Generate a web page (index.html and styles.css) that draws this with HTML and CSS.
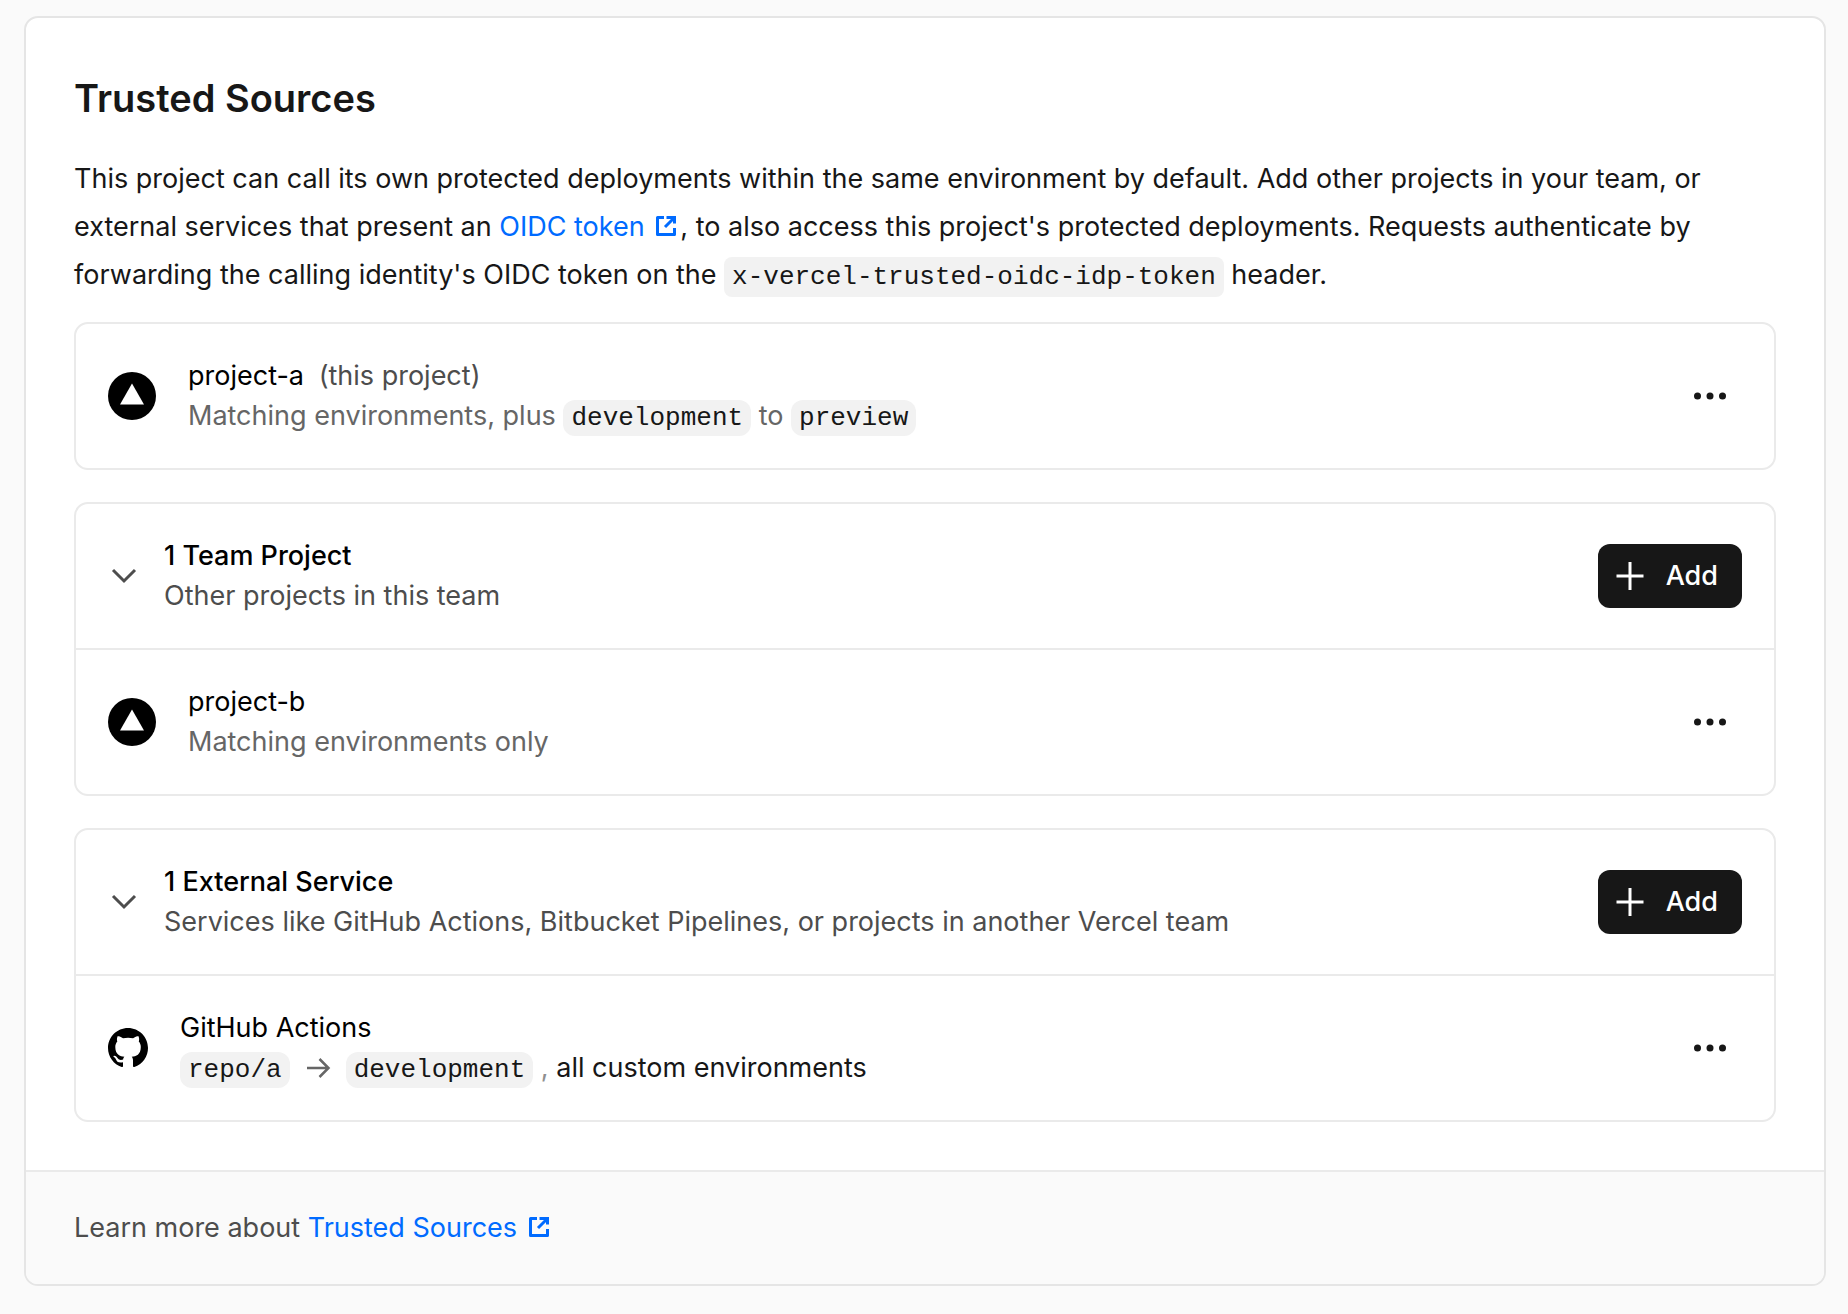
FILE: index.html
```html
<!DOCTYPE html>
<html lang="en">
<head>
  <meta charset="utf-8">
  <meta name="viewport" content="width=device-width, initial-scale=1">
  <title>Trusted Sources</title>
  <link rel="stylesheet" href="styles.css">
</head>
<body>
  <svg class="sprite" aria-hidden="true">
    <symbol id="icon-external" viewBox="0 0 28 28">
      <path fill="none" stroke="currentColor" stroke-width="3" stroke-linejoin="round" d="M12 5.500H5.500V22.500H22.500V16"/>
      <path fill="none" stroke="currentColor" stroke-width="3" d="M14.500 5.500H22.500V11.500M22 6L13 15"/>
    </symbol>
    <symbol id="icon-project" viewBox="0 0 48 48">
      <circle cx="24" cy="24" r="24"/>
      <path fill="#fff" d="M24 11.500L36 32.500H12Z"/>
    </symbol>
    <symbol id="icon-dots" viewBox="0 0 32 32">
      <circle cx="3.500" cy="16" r="3.500"/><circle cx="16" cy="16" r="3.500"/><circle cx="28.500" cy="16" r="3.500"/>
    </symbol>
    <symbol id="icon-chevron" viewBox="0 0 32 32">
      <path fill="none" stroke="currentColor" stroke-width="3" d="M5 10L16 21L27 10"/>
    </symbol>
    <symbol id="icon-plus" viewBox="0 0 32 32">
      <path fill="none" stroke="currentColor" stroke-width="3" d="M16 2V30M2.500 16H29.500"/>
    </symbol>
    <symbol id="icon-arrow" viewBox="0 0 32 32">
      <path fill="none" stroke="currentColor" stroke-width="2.500" d="M5 16H26M17.500 7L26.500 16L17.500 25"/>
    </symbol>
    <symbol id="icon-github" viewBox="0 0 16 16">
      <path d="M8 0C3.580 0 0 3.580 0 8c0 3.540 2.290 6.530 5.470 7.590.4.070.55-.17.55-.38 0-.19-.01-.82-.01-1.490-2.010.37-2.530-.49-2.690-.94-.09-.23-.48-.94-.82-1.130-.28-.15-.68-.52-.01-.53.63-.01 1.080.58 1.230.82.72 1.210 1.870.87 2.330.66.070-.52.28-.87.51-1.070-1.780-.2-3.640-.89-3.640-3.950 0-.87.31-1.590.82-2.150-.08-.2-.36-1.020.08-2.120 0 0 .67-.21 2.200.82.640-.18 1.320-.27 2-.27s1.360.09 2 .27c1.530-1.040 2.200-.82 2.200-.82.440 1.100.16 1.920.08 2.120.51.560.82 1.270.82 2.150 0 3.070-1.870 3.750-3.650 3.950.29.250.54.730.54 1.480 0 1.070-.01 1.930-.01 2.200 0 .21.15.46.55.38A8.010 8.010 0 0 0 16 8c0-4.420-3.580-8-8-8z"/>
    </symbol>
  </svg>

  <main class="card">
    <div class="card-body">
      <h1 class="title">Trusted Sources</h1>
      <p class="intro">This project can call its own protected deployments within the same environment by default. Add other projects in your team, or external services that present an <a class="link" href="#oidc">OIDC token <svg class="icon-inline"><use href="#icon-external"/></svg></a>, to also access this project's protected deployments. Requests authenticate by forwarding the calling identity's OIDC token on the <code class="code">x-vercel-trusted-oidc-idp-token</code> header.</p>

      <div class="groups">
        <section class="group">
          <div class="row row-project">
            <svg class="avatar"><use href="#icon-project"/></svg>
            <div class="text">
              <div class="name">project-a <span class="note">(this project)</span></div>
              <div class="detail">Matching environments, plus <code class="code chip">development</code> to <code class="code chip">preview</code></div>
            </div>
            <button class="more" type="button" aria-label="Project actions"><svg class="icon"><use href="#icon-dots"/></svg></button>
          </div>
        </section>

        <section class="group">
          <div class="row row-header">
            <button class="toggle" type="button" aria-label="Collapse team projects" aria-expanded="true"><svg class="icon"><use href="#icon-chevron"/></svg></button>
            <div class="text">
              <h2 class="heading">1 Team Project</h2>
              <p class="summary">Other projects in this team</p>
            </div>
            <button class="add" type="button"><svg class="icon"><use href="#icon-plus"/></svg>Add</button>
          </div>
          <div class="row row-project">
            <svg class="avatar"><use href="#icon-project"/></svg>
            <div class="text">
              <div class="name">project-b</div>
              <div class="detail">Matching environments only</div>
            </div>
            <button class="more" type="button" aria-label="Project actions"><svg class="icon"><use href="#icon-dots"/></svg></button>
          </div>
        </section>

        <section class="group">
          <div class="row row-header">
            <button class="toggle" type="button" aria-label="Collapse external services" aria-expanded="true"><svg class="icon"><use href="#icon-chevron"/></svg></button>
            <div class="text">
              <h2 class="heading">1 External Service</h2>
              <p class="summary">Services like GitHub Actions, Bitbucket Pipelines, or projects in another Vercel team</p>
            </div>
            <button class="add" type="button"><svg class="icon"><use href="#icon-plus"/></svg>Add</button>
          </div>
          <div class="row row-service">
            <svg class="logo"><use href="#icon-github"/></svg>
            <div class="text">
              <div class="name">GitHub Actions</div>
              <div class="mapping">
                <span><code class="code chip">repo/a</code></span>
                <svg class="icon"><use href="#icon-arrow"/></svg>
                <span><code class="code chip">development</code> <span class="comma">,</span> all custom environments</span>
              </div>
            </div>
            <button class="more" type="button" aria-label="Service actions"><svg class="icon"><use href="#icon-dots"/></svg></button>
          </div>
        </section>
      </div>
    </div>
    <footer class="card-footer">Learn more about <a class="link" href="#trusted-sources">Trusted Sources <svg class="icon-inline"><use href="#icon-external"/></svg></a></footer>
  </main>
</body>
</html>
```
FILE: styles.css
```css
* {
  box-sizing: border-box;
}

body {
  margin: 0;
  padding: 16px 22px 24px 24px;
  background: #fafafa;
  color: #171717;
  font-family: Inter, "Liberation Sans", sans-serif;
  font-size: 27px;
  line-height: 40px;
}

h1, h2, p {
  margin: 0;
}

button {
  border: 0;
  padding: 0;
  font: inherit;
  cursor: pointer;
}

svg {
  display: block;
  flex: none;
  fill: currentColor;
}

.sprite {
  position: absolute;
  width: 0;
  height: 0;
}

.card {
  border: 2px solid #e5e5e5;
  border-radius: 14px;
  background: #fff;
  overflow: hidden;
}

.card-body {
  padding: 48px;
}

.title {
  margin-bottom: 25px;
  font-size: 38px;
  font-weight: 600;
  line-height: 64px;
}

.intro {
  margin-bottom: 23px;
  line-height: 48px;
}

.link {
  color: #006bff;
  text-decoration: none;
}

.icon-inline {
  display: inline-block;
  width: 28px;
  height: 28px;
  vertical-align: -4px;
}

.code {
  padding: 5px 8px;
  border-radius: 8px;
  background: #f2f2f2;
  color: #171717;
  font-family: "Liberation Mono", monospace;
  font-size: 26px;
  line-height: 1;
}

.chip {
  padding: 3px 8px;
  border-radius: 12px;
}

.groups {
  display: flex;
  flex-direction: column;
  gap: 32px;
}

.group {
  border: 2px solid #eaeaea;
  border-radius: 14px;
}

.row {
  display: flex;
  align-items: center;
  gap: 32px;
  padding: 32px;
}

.row + .row {
  border-top: 2px solid #eaeaea;
}

.row-header {
  gap: 24px;
}

.text {
  flex: 1;
  min-width: 0;
}

.avatar {
  width: 48px;
  height: 48px;
  color: #000;
}

.logo {
  width: 40px;
  height: 40px;
  color: #000;
}

.icon {
  width: 32px;
  height: 32px;
}

.name {
  color: #000;
}

.note {
  margin-left: 7px;
  color: #4d4d4d;
}

.detail {
  color: #666;
}

.heading {
  color: #000;
  font-size: 27px;
  font-weight: 500;
  line-height: 40px;
}

.summary {
  color: #4d4d4d;
}

.mapping {
  display: flex;
  align-items: center;
  gap: 12px;
}

.mapping .icon {
  color: #666;
}

.comma {
  color: #8f8f8f;
}

.toggle {
  background: none;
  color: #4d4d4d;
}

.more {
  display: grid;
  place-items: center;
  width: 64px;
  height: 64px;
  border-radius: 12px;
  background: none;
  color: #171717;
}

.add {
  display: flex;
  align-items: center;
  gap: 20px;
  height: 64px;
  padding: 0 24px 0 16px;
  border-radius: 12px;
  background: #171717;
  color: #fff;
  font-weight: 500;
}

.card-footer {
  padding: 36px 48px;
  border-top: 2px solid #eaeaea;
  background: #fafafa;
  color: #4d4d4d;
}
```
